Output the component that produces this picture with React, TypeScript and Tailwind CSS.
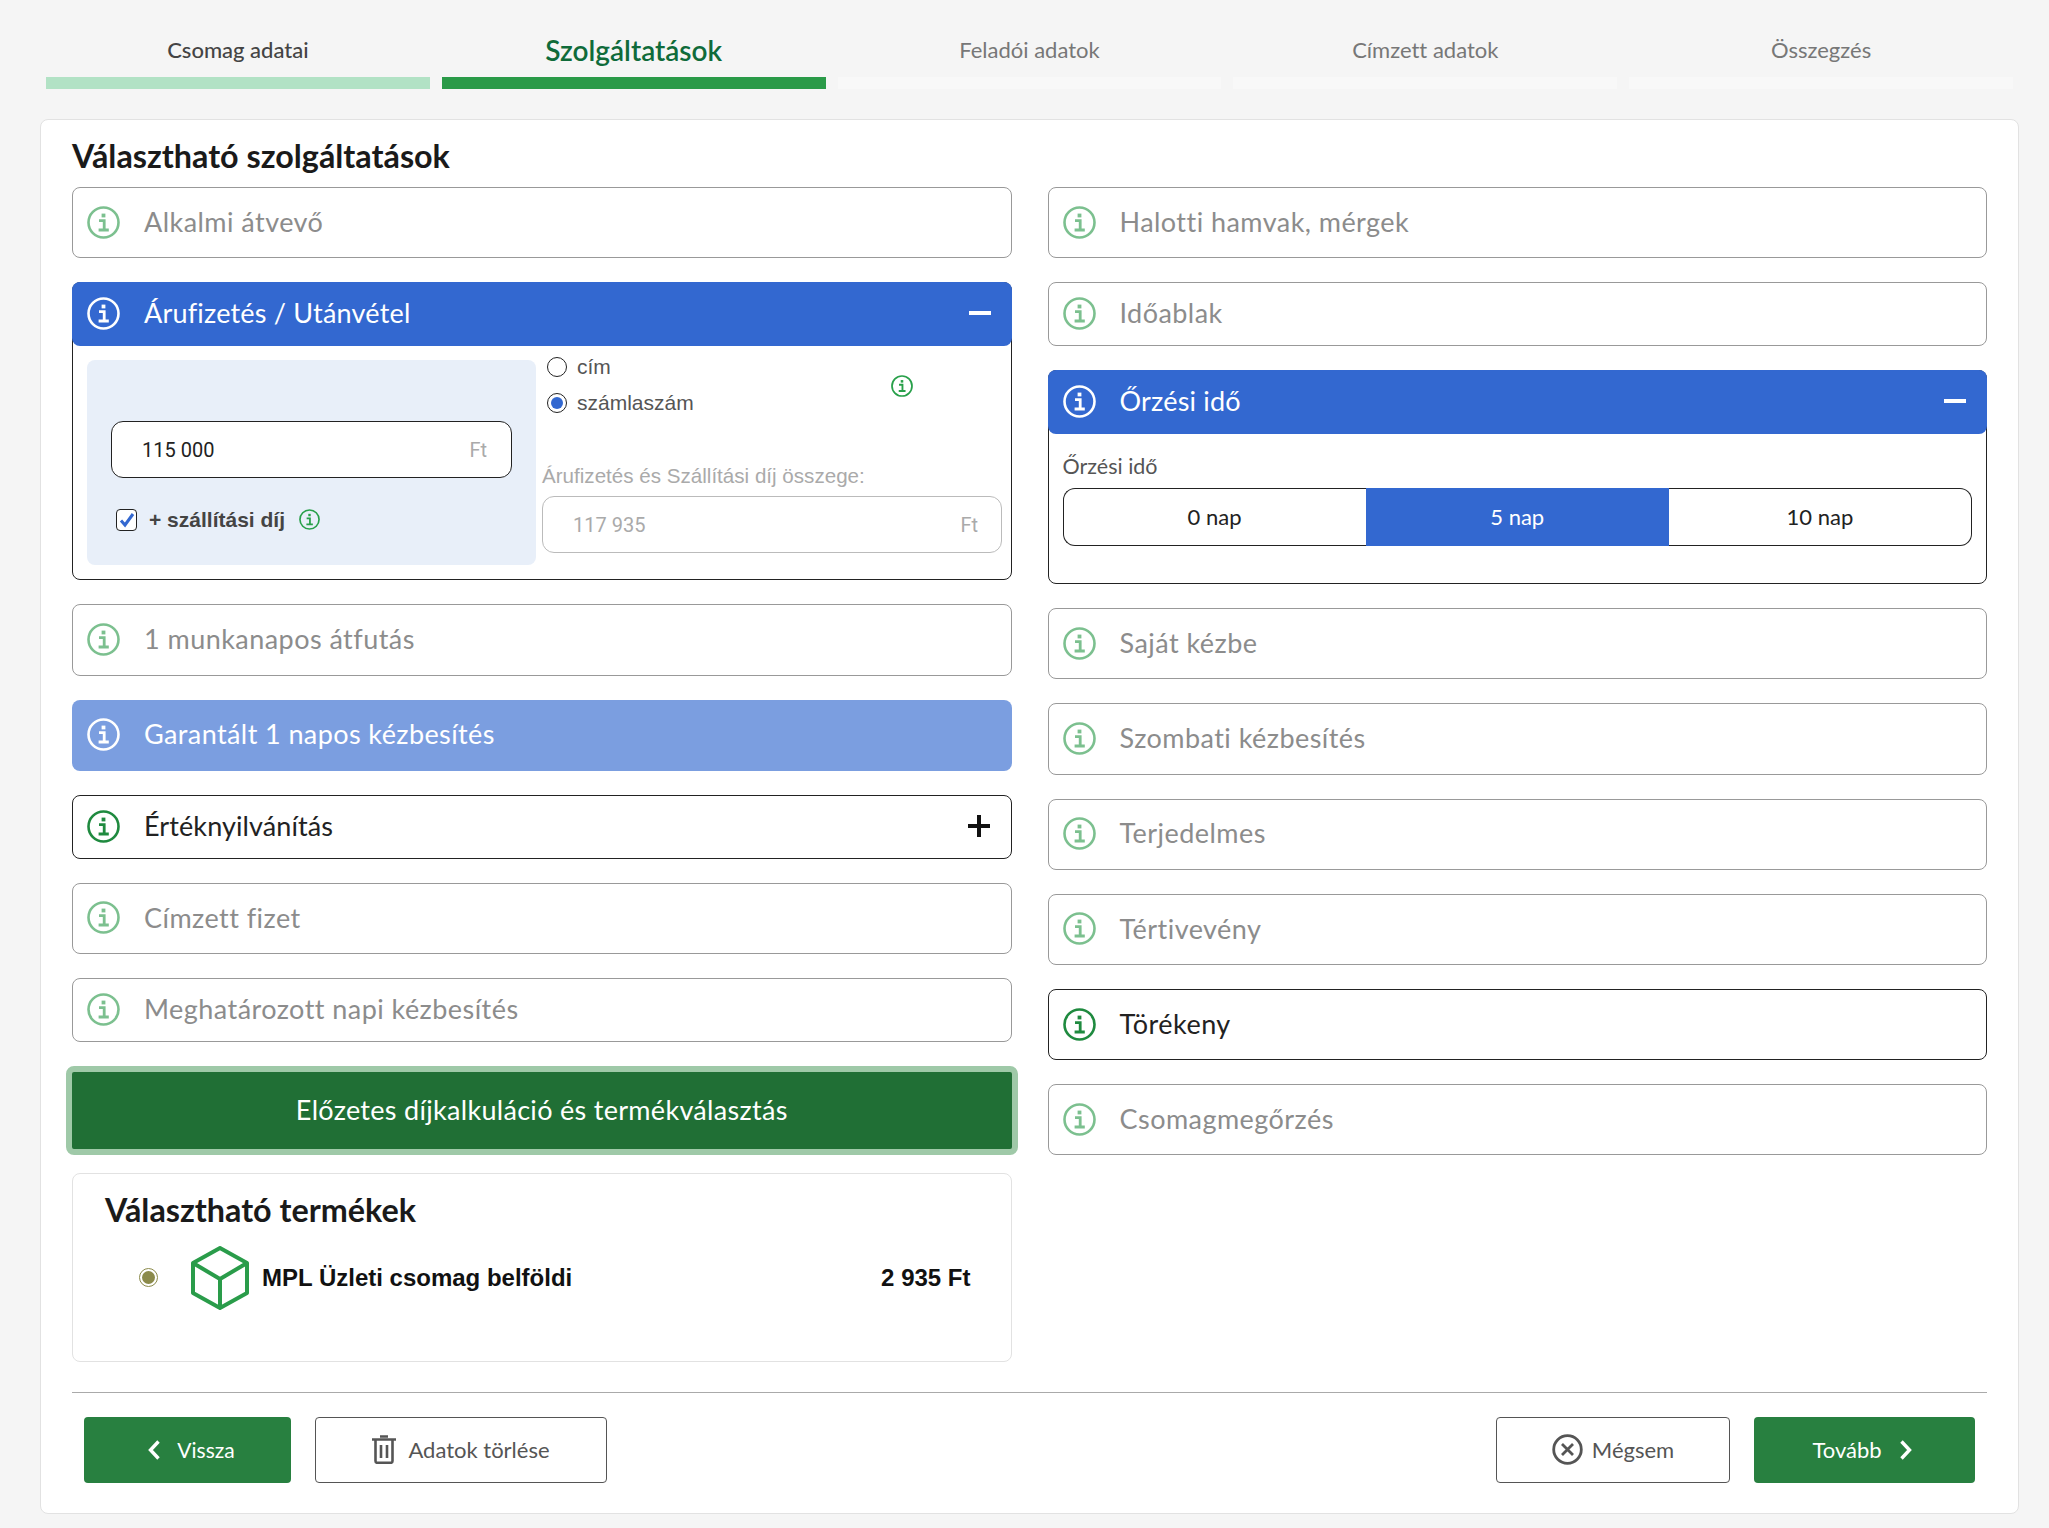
const arial = "font-['Liberation_Sans',sans-serif]";
const roboto = "font-['Roboto',sans-serif]";

const InfoIcon = ({ className }: { className: string }) => (
  <svg className={className} viewBox="0 0 33 33" fill="none" stroke="currentColor">
    <circle cx="16.5" cy="16.5" r="15" strokeWidth="2.6" />
    <rect x="14.6" y="7.6" width="3.8" height="3.8" fill="currentColor" stroke="none" />
    <path d="M12 14.6h5.2v9M11.6 24h10.2" strokeWidth="2.8" />
  </svg>
);

const Row = ({ label, tall = true, strong = false }: { label: string; tall?: boolean; strong?: boolean }) => (
  <div
    className={`flex items-center pl-[14px] pb-[1px] rounded-lg border bg-white ${tall ? "h-[71.2px]" : "h-[64px]"} ${
      strong ? "border-[#222]" : "border-[#999]"
    }`}
  >
    <InfoIcon className={`w-[33px] h-[33px] shrink-0 ${strong ? "text-[#1f8a3f]" : "text-[#7cc08f]"}`} />
    <span className={`ml-[24px] text-[27px] tracking-[0.45px] ${strong ? "text-[#222]" : "text-[#8c8c8c]"}`}>{label}</span>
  </div>
);

const Header = ({ label }: { label: string }) => (
  <div className="flex items-center h-[64px] pl-[15px] pr-[21px] pb-[2px] rounded-lg bg-[#3368d0] text-white -mx-px -mt-px">
    <InfoIcon className="w-[33px] h-[33px] shrink-0" />
    <span className="ml-[24px] text-[27px] tracking-[0.2px] flex-1">{label}</span>
    <div className="w-[22px] h-[4px] bg-white" />
  </div>
);

const Radio = ({ label, checked = false }: { label: string; checked?: boolean }) => (
  <div className="flex items-center gap-[10px] h-[24px]">
    <div className="w-[20px] h-[20px] rounded-full border border-[#222] bg-white flex items-center justify-center">
      {checked && <div className="w-[12px] h-[12px] rounded-full bg-[#3368d0]" />}
    </div>
    <span className={`text-[21px] text-[#555] ${arial}`}>{label}</span>
  </div>
);

const Tab = ({ label, barClass, textClass }: { label: string; barClass: string; textClass: string }) => (
  <div>
    <div className={`h-[77px] flex items-center justify-center pt-[22px] ${textClass}`}>{label}</div>
    <div className={`h-[12px] ${barClass}`} />
  </div>
);

export default function App() {
  return (
    <div className="h-[1528px] bg-[#f5f5f5] font-['Lato',sans-serif] [font-variant-ligatures:none] overflow-hidden">
      <div className="grid grid-cols-5 gap-[12px] pl-[46px] pr-[36px]">
        <Tab label="Csomag adatai" barClass="bg-[#b2e2c5]" textClass="text-[22px] font-medium text-[#444]" />
        <Tab label="Szolgáltatások" barClass="bg-[#2a9a48]" textClass="text-[28px] font-semibold text-[#0f6b3a]" />
        <Tab label="Feladói adatok" barClass="bg-[#f8f8f8]" textClass="text-[22px] text-[#777]" />
        <Tab label="Címzett adatok" barClass="bg-[#f8f8f8]" textClass="text-[22px] text-[#777]" />
        <Tab label="Összegzés" barClass="bg-[#f8f8f8]" textClass="text-[22px] text-[#777]" />
      </div>

      <div className="mt-[30px] ml-[40px] mr-[30px] h-[1395px] bg-white rounded-lg border border-[#e2e2e2] px-[31px]">
        <h1 className="pt-[20px] mb-[15px] text-[32.3px] leading-[32px] font-bold text-[#1a1a1a]">
          Választható szolgáltatások
        </h1>

        <div className="grid grid-cols-2 gap-x-[36px]">
          <div className="flex flex-col gap-[24px]">
            <Row label="Alkalmi átvevő" />
            <div className="h-[298.2px] rounded-lg border border-[#222]">
              <Header label="Árufizetés / Utánvétel" />
              <div className={`flex ${roboto}`}>
                <div className="mt-[14px] ml-[14px] w-[449px] h-[205px] rounded-lg bg-[#e8eff9] px-[24px] pt-[61px]">
                  <div className="h-[57px] flex items-center justify-between pl-[30px] pr-[24px] rounded-xl border border-[#222] bg-white text-[20px] text-[#222]">
                    <span>115 000</span>
                    <span className="text-[#aaa]">Ft</span>
                  </div>
                  <div className="mt-[26px] flex items-center">
                    <div className="ml-[5px] w-[21px] h-[22px] rounded border border-[#222] bg-white flex items-center justify-center">
                      <svg className="w-[16px] h-[16px]" viewBox="0 0 16 16" fill="none" stroke="#3368d0" strokeWidth="3">
                        <path d="M2 8.5l4 4.5 8-11" />
                      </svg>
                    </div>
                    <span className={`ml-[12px] text-[21px] font-bold text-[#444] ${arial}`}>+ szállítási díj</span>
                    <InfoIcon className="ml-[14px] w-[21px] h-[21px] text-[#28a04a]" />
                  </div>
                </div>
                <div className="ml-[6px] w-[460px] pt-[9px]">
                  <div className="flex justify-between pl-[5px] pr-[89px]">
                    <div className="flex flex-col gap-[12px]">
                      <Radio label="cím" />
                      <Radio label="számlaszám" checked />
                    </div>
                    <InfoIcon className="mt-[20px] w-[22px] h-[22px] text-[#28a04a]" />
                  </div>
                  <div className={`mt-[49px] text-[20.6px] leading-[24px] text-[#aaa] ${arial}`}>Árufizetés és Szállítási díj összege:</div>
                  <div className="mt-[8px] h-[57px] flex items-center justify-between pl-[30px] pr-[23px] rounded-xl border border-[#bbb] text-[20px] text-[#aaa]">
                    <span>117 935</span>
                    <span>Ft</span>
                  </div>
                </div>
              </div>
            </div>
            <Row label="1 munkanapos átfutás" />
            <div className="flex items-center h-[71.2px] pl-[15px] pb-[1px] rounded-lg bg-[#7b9ee0] text-white">
              <InfoIcon className="w-[33px] h-[33px] shrink-0" />
              <span className="ml-[24px] text-[27px] tracking-[0.4px]">Garantált 1 napos kézbesítés</span>
            </div>
            <div className="flex items-center h-[64px] pl-[14px] pr-[21px] pb-[1px] rounded-lg border border-[#222]">
              <InfoIcon className="w-[33px] h-[33px] shrink-0 text-[#1f8a3f]" />
              <span className="ml-[24px] text-[27px] tracking-[0.1px] text-[#222] flex-1">Értéknyilvánítás</span>
              <svg className="w-[22px] h-[22px]" viewBox="0 0 22 22" stroke="#111" strokeWidth="4">
                <path d="M0 11h22M11 0v22" />
              </svg>
            </div>
            <Row label="Címzett fizet" />
            <Row label="Meghatározott napi kézbesítés" tall={false} />

            <button className="h-[89px] -mx-[6px] rounded-lg border-[6px] border-[#9fc9a8] bg-[#206f35] text-white text-[27px] tracking-[0.3px]">
              Előzetes díjkalkuláció és termékválasztás
            </button>

            <div className="-mt-[6px] h-[189px] rounded-lg border border-[#e2e2e2] pl-[32px] pr-[40px] pt-[20px]">
              <h2 className="text-[32.3px] leading-[32px] font-bold text-[#1a1a1a]">Választható termékek</h2>
              <div className="mt-[20px] flex items-center">
                <div className="ml-[34px] w-[19px] h-[19px] rounded-full border border-[#8b8a4a] flex items-center justify-center">
                  <div className="w-[13px] h-[13px] rounded-full bg-[#8b8a4a]" />
                </div>
                <svg className="ml-[33px] w-[58px] h-[64px]" viewBox="0 0 58 64" fill="none" stroke="#2a9c4a" strokeWidth="4" strokeLinejoin="round">
                  <path d="M29 2L56 17V47L29 62L2 47V17Z" />
                  <path d="M2 17L29 33L56 17M29 33V62" />
                </svg>
                <span className={`ml-[13px] flex-1 font-bold text-[24px] text-[#111] ${arial}`}>MPL Üzleti csomag belföldi</span>
                <span className={`font-bold text-[24px] text-[#111] ${arial}`}>2 935 Ft</span>
              </div>
            </div>
          </div>

          <div className="flex flex-col gap-[24px]">
            <Row label="Halotti hamvak, mérgek" />
            <Row label="Időablak" tall={false} />
            <div className="h-[214px] rounded-lg border border-[#222]">
              <Header label="Őrzési idő" />
              <div className="pl-[14px] pr-[14px]">
                <div className="mt-[18px] text-[21.5px] leading-[28px] text-[#555]">Őrzési idő</div>
                <div className="mt-[8px] grid grid-cols-3 h-[58px] text-[22px]">
                  <div className="flex items-center justify-center pb-[2px] rounded-l-xl border border-r-0 border-[#222] text-[#222]">0 nap</div>
                  <div className="flex items-center justify-center pb-[2px] bg-[#3368d0] text-white">5 nap</div>
                  <div className="flex items-center justify-center pb-[2px] rounded-r-xl border border-l-0 border-[#222] text-[#222]">10 nap</div>
                </div>
              </div>
            </div>
            <Row label="Saját kézbe" />
            <Row label="Szombati kézbesítés" />
            <Row label="Terjedelmes" />
            <Row label="Tértivevény" />
            <Row label="Törékeny" strong />
            <Row label="Csomagmegőrzés" />
          </div>
        </div>

        <div className="mt-[30px] border-t border-[#aaa] pt-[24px] px-[12px] flex items-center text-[22px]">
          <button className="w-[207px] h-[66px] pl-[8px] rounded bg-[#288040] text-white flex items-center justify-center gap-[17px] text-[21px]">
            <svg className="w-[12px] h-[20px]" viewBox="0 0 12 20" fill="none" stroke="white" strokeWidth="3.4">
              <path d="M10.5 1.5L2.5 10l8 8.5" />
            </svg>
            Vissza
          </button>
          <button className="ml-[24px] w-[292px] h-[66px] rounded border border-[#555] text-[#555] flex items-center justify-center gap-[12px]">
            <svg className="w-[24px] h-[29px]" viewBox="0 0 24 29" fill="none" stroke="#555" strokeWidth="2.6">
              <path d="M0 4.5h24M8 1.5h8M3.5 5v21a1.8 1.8 0 0 0 1.8 1.8h13.4a1.8 1.8 0 0 0 1.8-1.8V5M9 10v13M15 10v13" />
            </svg>
            Adatok törlése
          </button>
          <button className="ml-auto w-[234px] h-[66px] rounded border border-[#555] text-[#555] flex items-center justify-center gap-[9px]">
            <svg className="w-[31px] h-[31px]" viewBox="0 0 31 31" fill="none" stroke="#555" strokeWidth="2.8">
              <circle cx="15.5" cy="15.5" r="13.8" />
              <path d="M10 10l11 11M21 10L10 21" />
            </svg>
            Mégsem
          </button>
          <button className="ml-[24px] w-[221px] h-[66px] pr-[5px] rounded bg-[#288040] text-white flex items-center justify-center gap-[18px]">
            Tovább
            <svg className="w-[12px] h-[20px]" viewBox="0 0 12 20" fill="none" stroke="white" strokeWidth="3.4">
              <path d="M1.5 1.5l8 8.5-8 8.5" />
            </svg>
          </button>
        </div>
      </div>
    </div>
  );
}
